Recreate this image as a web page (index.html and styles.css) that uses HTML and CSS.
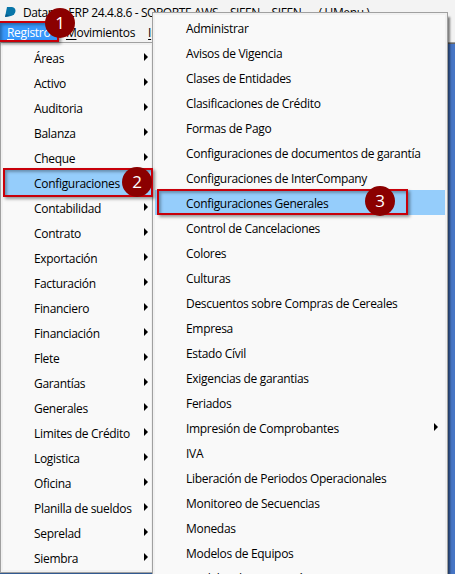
FILE: index.html
```
<!DOCTYPE html>
<html lang="es">
<head>
    <meta charset="UTF-8">
    <title>Datapar ERP</title>
    <link rel="stylesheet" href="styles.css">
</head>
<body>
    <div class="window">
        <div class="title-bar">
            <svg class="logo" viewBox="0 0 11 12"><path d="M2 1h5q3.500 .5 3.500 4Q10 9 6 10L0 11z" fill="#0875a8"/><path d="M0 11L1 8l4 2z" fill="#075b8c"/></svg>
            <span class="title">Datapar ERP 24.4.8.6 - SOPORTE AWS -  SIFEN -  SIFEN -    ( UMenu )</span>
        </div>
        <div class="menu-bar">
            <span class="menu-tab active"><u>R</u>egistro</span>
            <span class="menu-tab"><u>M</u>ovimientos</span>
            <span class="menu-tab"><u>I</u>nformes</span>
        </div>
        <div class="workspace">
            <div class="status"></div>
        </div>
    </div>

    <!-- Menú principal -->
    <ul class="menu main-menu">
        <li class="sub">Áreas</li>
        <li class="sub">Activo</li>
        <li class="sub">Auditoria</li>
        <li class="sub">Balanza</li>
        <li class="sub">Cheque</li>
        <li class="selected">Configuraciones</li>
        <li class="sub">Contabilidad</li>
        <li class="sub">Contrato</li>
        <li class="sub">Exportación</li>
        <li class="sub">Facturación</li>
        <li class="sub">Financiero</li>
        <li class="sub">Financiación</li>
        <li class="sub">Flete</li>
        <li class="sub">Garantías</li>
        <li class="sub">Generales</li>
        <li class="sub">Limites de Crédito</li>
        <li class="sub">Logistica</li>
        <li class="sub">Oficina</li>
        <li class="sub">Planilla de sueldos</li>
        <li class="sub">Seprelad</li>
        <li class="sub">Siembra</li>
    </ul>

    <!-- Submenú de configuraciones -->
    <ul class="menu config-menu">
        <li>Administrar</li>
        <li>Avisos de Vigencia</li>
        <li>Clases de Entidades</li>
        <li>Clasificaciones de Crédito</li>
        <li>Formas de Pago</li>
        <li>Configuraciones de documentos de garantía</li>
        <li>Configuraciones de InterCompany</li>
        <li class="selected">Configuraciones Generales</li>
        <li>Control de Cancelaciones</li>
        <li>Colores</li>
        <li>Culturas</li>
        <li>Descuentos sobre Compras de Cereales</li>
        <li>Empresa</li>
        <li>Estado Cívil</li>
        <li>Exigencias de garantias</li>
        <li>Feriados</li>
        <li class="sub">Impresión de Comprobantes</li>
        <li>IVA</li>
        <li>Liberación de Periodos Operacionales</li>
        <li>Monitoreo de Secuencias</li>
        <li>Monedas</li>
        <li>Modelos de Equipos</li>
        <li>Modelos de Integración</li>
    </ul>

    <!-- Pasos marcados -->
    <div class="frame frame-1"></div>
    <div class="frame frame-2"></div>
    <div class="frame frame-3"></div>
    <div class="badge badge-1">1</div>
    <div class="badge badge-2">2</div>
    <div class="badge badge-3">3</div>
</body>
</html>
```
FILE: styles.css
```
* {
    box-sizing: border-box;
}

body {
    margin: 0;
    position: relative;
    width: 455px;
    height: 574px;
    overflow: hidden;
    font-family: "Open Sans", "Noto Sans", sans-serif;
    font-size: 12px;
    letter-spacing: -0.31px;
    color: #000;
}

.window {
    display: flex;
    flex-direction: column;
    height: 574px;
    background: #f3f3f3;
}

.title-bar {
    display: flex;
    align-items: center;
    height: 23px;
    padding: 1px 0 0 5px;
    white-space: pre;
}

.logo {
    width: 11px;
    height: 12px;
    margin-right: 7px;
}

.title {
    letter-spacing: -0.38px;
}

.menu-bar {
    display: flex;
    height: 20px;
    line-height: 19px;
    border-bottom: 1px solid #999;
}

.menu-tab {
    padding: 0 6px 0 7px;
}

.menu-tab u {
    text-underline-offset: 2px;
}

.menu-tab.active {
    width: 59px;
    background: #3797fb;
    color: #fff;
}

.workspace {
    flex: 1;
    display: flex;
    align-items: flex-end;
    background: #4776c5;
    border-top: 1px solid #666;
}

.status {
    width: 153px;
    height: 12px;
    background: #315a91;
}

/* Menús desplegables */
.menu {
    position: absolute;
    margin: 0;
    padding: 2px;
    list-style: none;
    background: #f9f9f9;
    border: 1px solid #a0a0a0;
    box-shadow: inset 0 0 0 2px #f1f1f1;
}

.menu li {
    position: relative;
    height: 25px;
    padding-left: 31px;
    line-height: 27px;
    white-space: nowrap;
}

.menu li.selected {
    background: #95cdfb;
}

.menu li.sub::after {
    content: "";
    position: absolute;
    top: 8px;
    right: 3px;
    border: 4px solid transparent;
    border-left: 4px solid #000;
    border-right: 0;
}

.main-menu {
    left: 0;
    top: 42px;
    width: 154px;
    height: 531px;
}

.config-menu {
    left: 152px;
    top: 12px;
    width: 296px;
    height: 580px;
    box-shadow: inset 0 0 0 2px #f1f1f1, 2px 5px 2px rgba(0, 0, 0, 0.5);
}

.config-menu li.sub::after {
    right: 7px;
}

/* Recuadros y números de los pasos */
.frame {
    position: absolute;
    border: 2px solid #c8000a;
    box-shadow: 2px 2px 3px rgba(0, 0, 0, 0.4), inset 2px 2px 3px rgba(0, 0, 0, 0.3);
}

.frame-1 {
    left: -2px;
    top: 21px;
    width: 61px;
    height: 21px;
}

.frame-2 {
    left: 3px;
    top: 168px;
    width: 150px;
    height: 29px;
}

.frame-3 {
    left: 157px;
    top: 189px;
    width: 251px;
    height: 26px;
}

.badge {
    position: absolute;
    width: 30px;
    height: 30px;
    border-radius: 50%;
    background: #8b0000;
    color: #fff;
    font-size: 17px;
    line-height: 29px;
    letter-spacing: 0;
    text-align: center;
}

.badge-1 {
    left: 45px;
    top: 8px;
}

.badge-2 {
    left: 122px;
    top: 167px;
}

.badge-3 {
    left: 365px;
    top: 186px;
}
```
